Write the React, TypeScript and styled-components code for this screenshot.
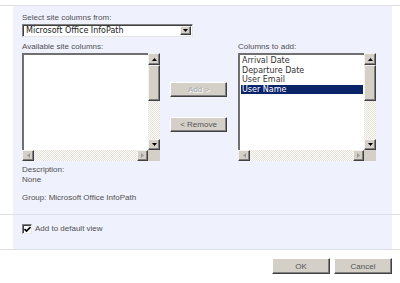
import * as React from 'react';
import styled, { createGlobalStyle } from 'styled-components';

const GlobalStyle = createGlobalStyle`
  html, body { margin: 0; padding: 0; background: #fff; }
  body {
    font-family: "Liberation Sans", Arial, sans-serif;
    font-size: 8px;
    color: #4f4f4f;
  }
`;

const face = '#d4d0c8';
const panel = '#eff2fd';
const rule = '#dcdfe6';

const Page = styled.div`
  width: 400px;
  height: 283px;
  padding-top: 5px;
  box-sizing: border-box;
`;

const Section = styled.div<{ $top?: boolean }>`
  border-top: ${(p) => (p.$top ? `1px solid ${rule}` : 'none')};
  border-bottom: 1px solid ${rule};
`;

const Panel = styled.div<{ $height: number }>`
  margin: 0 8px 0 13px;
  height: ${(p) => p.$height}px;
  background: ${panel};
  padding: 7px 0 0 9px;
  box-sizing: border-box;
`;

const CheckPanel = styled(Panel)`
  padding: 9px 0 0 9px;
  display: flex;
  align-items: flex-start;
  gap: 3px;
`;

const Label = styled.div`
  line-height: 10px;
  height: 10px;
  white-space: nowrap;
`;

const Select = styled.div`
  margin-top: 1px;
  width: 171px;
  height: 13px;
  box-sizing: border-box;
  background: #fff;
  border-top: 1px solid #808080;
  border-left: 1px solid #808080;
  border-right: 1px solid #e4e4e4;
  border-bottom: 1px solid #e4e4e4;
  box-shadow: inset 1px 1px 0 #404040;
  display: flex;
  align-items: center;
  justify-content: space-between;
  padding: 1px 1px 1px 3px;
`;

const SelectText = styled.span`
  font-family: "DejaVu Sans", Verdana, sans-serif;
  font-size: 8px;
  color: #1a1a1a;
  line-height: 10px;
`;

const Columns = styled.div`
  display: flex;
  align-items: flex-start;
  margin-top: 5px;
`;

const Column = styled.div<{ $gap?: number }>`
  width: 138px;
  margin-left: ${(p) => p.$gap ?? 0}px;
  display: flex;
  flex-direction: column;
  gap: 1px;
`;

const Mover = styled.div`
  width: 57px;
  margin-left: 10px;
  padding-top: 40px;
  display: flex;
  flex-direction: column;
  gap: 20px;
`;

const Button = styled.div<{ $w: number; $h: number; $disabled?: boolean }>`
  width: ${(p) => p.$w}px;
  height: ${(p) => p.$h}px;
  box-sizing: border-box;
  background: ${face};
  border-top: 1px solid #fff;
  border-left: 1px solid #fff;
  border-right: 1px solid #404040;
  border-bottom: 1px solid #404040;
  box-shadow: inset -1px -1px 0 #808080;
  display: flex;
  align-items: center;
  justify-content: center;
  color: ${(p) => (p.$disabled ? '#a8a8a8' : '#555')};
  text-shadow: ${(p) => (p.$disabled ? '1px 1px 0 #fff' : 'none')};
  white-space: nowrap;
`;

const ListFrame = styled.div`
  width: 138px;
  height: 108px;
  display: grid;
  grid-template-columns: 1fr 12px;
  grid-template-rows: 1fr 11px;
`;

const ListContent = styled.div`
  background: #fff;
  border-top: 2px solid #707070;
  border-left: 2px solid #707070;
  padding: 1px 1px 0 1px;
  overflow: hidden;
`;

const Item = styled.div<{ $selected?: boolean }>`
  font-family: "DejaVu Sans", Verdana, sans-serif;
  font-size: 8px;
  line-height: 9.5px;
  height: 9.5px;
  padding-left: 1px;
  white-space: nowrap;
  color: ${(p) => (p.$selected ? '#fff' : '#333')};
  background: ${(p) => (p.$selected ? '#0a246a' : 'transparent')};
`;

const VBar = styled.div`
  display: flex;
  flex-direction: column;
`;

const HBar = styled.div`
  display: flex;
`;

const Track = styled.div`
  flex: 1;
  background: repeating-conic-gradient(#e6e3dc 0 25%, #fbfaf7 0 50%) 0 0 / 2px 2px;
`;

const Thumb = styled.div<{ $len: number }>`
  height: ${(p) => p.$len}px;
  box-sizing: border-box;
  background: ${face};
  border-top: 1px solid #f4f3ef;
  border-left: 1px solid #f4f3ef;
  border-right: 1px solid #404040;
  border-bottom: 1px solid #404040;
  box-shadow: inset -1px -1px 0 #808080;
`;

const Arrow = styled.div<{ $w: number; $h: number }>`
  width: ${(p) => p.$w}px;
  height: ${(p) => p.$h}px;
  flex: none;
  box-sizing: border-box;
  background: ${face};
  border-top: 1px solid #f4f3ef;
  border-left: 1px solid #f4f3ef;
  border-right: 1px solid #404040;
  border-bottom: 1px solid #404040;
  box-shadow: inset -1px -1px 0 #808080;
  display: flex;
  align-items: center;
  justify-content: center;
`;

const Corner = styled.div`
  background: ${face};
`;

const Description = styled.div`
  margin-top: 4px;
  line-height: 10px;
`;

const GroupLine = styled(Label)`
  margin-top: 8px;
`;

const Checkbox = styled.div`
  width: 10px;
  height: 10px;
  box-sizing: border-box;
  background: #fff;
  border-top: 1px solid #808080;
  border-left: 1px solid #808080;
  border-right: 1px solid #e8e8e8;
  border-bottom: 1px solid #e8e8e8;
  box-shadow: inset 1px 1px 0 #404040;
  display: flex;
  align-items: center;
  justify-content: center;
`;

const CheckLabel = styled.span`
  line-height: 10px;
`;

const Footer = styled.div`
  display: flex;
  justify-content: flex-end;
  gap: 4px;
  padding: 8px 8px 0 0;
`;

type Dir = 'up' | 'down' | 'left' | 'right';

const Tri: React.FC<{ dir: Dir; muted?: boolean }> = ({ dir, muted }) => {
  const pts: Record<Dir, string> = {
    up: '0,3 5,3 2.5,0',
    down: '0,0 5,0 2.5,3',
    left: '3,0 3,5 0,2.5',
    right: '0,0 0,5 3,2.5',
  };
  const vertical = dir === 'up' || dir === 'down';
  return (
    <svg width={vertical ? 5 : 3} height={vertical ? 3 : 5} viewBox={vertical ? '0 0 5 3' : '0 0 3 5'}>
      <polygon points={pts[dir]} fill={muted ? '#9a9a9a' : '#000'} />
    </svg>
  );
};

const ListBox: React.FC<{ items: string[]; selected?: number }> = ({ items, selected }) => (
  <ListFrame>
    <ListContent>
      {items.map((it, i) => (
        <Item key={it} $selected={i === selected}>
          {it}
        </Item>
      ))}
    </ListContent>
    <VBar>
      <Arrow $w={12} $h={12}>
        <Tri dir="up" />
      </Arrow>
      <Thumb $len={36} />
      <Track />
      <Arrow $w={12} $h={11}>
        <Tri dir="down" />
      </Arrow>
    </VBar>
    <HBar>
      <Arrow $w={12} $h={11}>
        <Tri dir="left" muted />
      </Arrow>
      <Track />
      <Arrow $w={11} $h={11}>
        <Tri dir="right" muted />
      </Arrow>
    </HBar>
    <Corner />
  </ListFrame>
);

const App: React.FC = () => {
  const toAdd = ['Arrival Date', 'Departure Date', 'User Email', 'User Name'];
  return (
    <Page>
      <GlobalStyle />
      <Section $top>
        <Panel $height={208}>
          <Label>Select site columns from:</Label>
          <Select>
            <SelectText>Microsoft Office InfoPath</SelectText>
            <Arrow $w={11} $h={9}>
              <Tri dir="down" />
            </Arrow>
          </Select>
          <Columns>
            <Column>
              <Label>Available site columns:</Label>
              <ListBox items={[]} />
            </Column>
            <Mover>
              <Button $w={57} $h={15} $disabled>
                Add &gt;
              </Button>
              <Button $w={57} $h={15}>
                &lt; Remove
              </Button>
            </Mover>
            <Column $gap={11}>
              <Label>Columns to add:</Label>
              <ListBox items={toAdd} selected={3} />
            </Column>
          </Columns>
          <Description>
            <div>Description:</div>
            <div>None</div>
          </Description>
          <GroupLine>Group: Microsoft Office InfoPath</GroupLine>
        </Panel>
      </Section>
      <Section>
        <CheckPanel $height={34}>
          <Checkbox>
            <svg width="7" height="7" viewBox="0 0 7 7">
              <path d="M0.5 3 L2.5 5 L6.5 1" stroke="#000" strokeWidth="1.6" fill="none" />
            </svg>
          </Checkbox>
          <CheckLabel>Add to default view</CheckLabel>
        </CheckPanel>
      </Section>
      <Footer>
        <Button $w={58} $h={16}>OK</Button>
        <Button $w={58} $h={16}>Cancel</Button>
      </Footer>
    </Page>
  );
};

export default App;
